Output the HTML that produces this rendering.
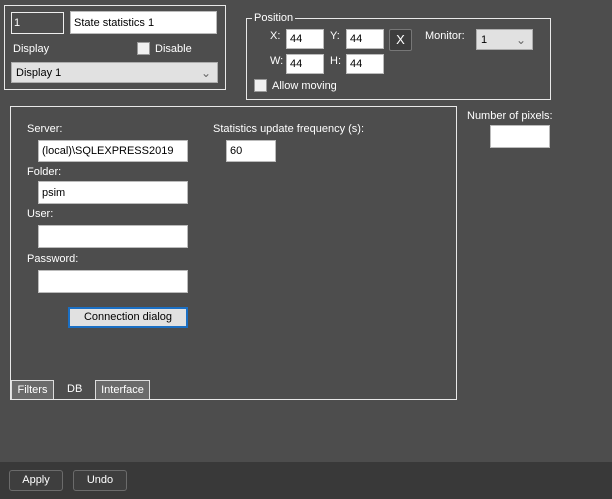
<!DOCTYPE html>
<html><head><style>
*{margin:0;padding:0;box-sizing:border-box}
body{width:612px;height:499px;background:#4d4d4d;position:relative;overflow:hidden;font-family:"Liberation Sans",Arial,sans-serif;font-size:11px;color:#fff}
div,span{position:absolute}
.b{border:1px solid #e8e8e8}
.in{background:#fff;color:#000;border:1px solid #bbb;padding:0 0 0 3px;display:flex;align-items:center}
.l{white-space:nowrap;line-height:13px}
.cb{width:13px;height:13px;background:#f0f0f0;border:1px solid #999}
.dd{background:#e1e1e1;color:#000;border:1px solid #adadad;padding:0 0 0 4px;display:flex;align-items:center}
.btn{background:#3e3e3e;border:1px solid #6b6b6b;border-radius:3px;text-align:center;line-height:19px}
.tab{background:#6a6a6a;border:1px solid #ddd;border-bottom:none;text-align:center;line-height:18px}
.ar{right:6px;top:3px;color:#666;font-size:12px}
</style></head><body>
<div class="b" style="left:4px;top:5px;width:222px;height:85px"></div>
<div style="left:11px;top:12px;width:53px;height:22px;border:1px solid #eee;padding:0 0 0 2px;display:flex;align-items:center">1</div>
<div class="in" style="left:70px;top:11px;width:147px;height:23px">State statistics 1</div>
<div class="l" style="left:13px;top:43px">Display</div>
<div class="cb" style="left:137px;top:42px"></div>
<div class="l" style="left:155px;top:43px">Disable</div>
<div class="dd" style="left:11px;top:62px;width:207px;height:21px">Display 1<span class="ar">&#8964;</span></div>

<div class="b" style="left:246px;top:18px;width:305px;height:82px"></div>
<div class="l" style="left:252px;top:12px;background:#4d4d4d;padding:0 2px">Position</div>
<div class="l" style="left:270px;top:30px">X:</div>
<div class="in" style="left:286px;top:29px;width:38px;height:20px">44</div>
<div class="l" style="left:330px;top:30px">Y:</div>
<div class="in" style="left:346px;top:29px;width:38px;height:20px">44</div>
<div style="left:389px;top:29px;width:23px;height:22px;background:#3d3d3d;border:1px solid #777;border-radius:2px;text-align:center;line-height:20px;font-size:13px">X</div>
<div class="l" style="left:425px;top:30px">Monitor:</div>
<div class="dd" style="left:476px;top:29px;width:57px;height:21px">1<span class="ar">&#8964;</span></div>
<div class="l" style="left:270px;top:55px">W:</div>
<div class="in" style="left:286px;top:54px;width:38px;height:20px">44</div>
<div class="l" style="left:330px;top:55px">H:</div>
<div class="in" style="left:346px;top:54px;width:38px;height:20px">44</div>
<div class="cb" style="left:254px;top:79px"></div>
<div class="l" style="left:272px;top:80px">Allow moving</div>

<div class="b" style="left:10px;top:106px;width:447px;height:294px"></div>
<div class="l" style="left:467px;top:110px">Number of pixels:</div>
<div class="in" style="left:490px;top:125px;width:60px;height:23px"></div>

<div class="l" style="left:27px;top:123px">Server:</div>
<div class="in" style="left:38px;top:140px;width:150px;height:22px">(local)\SQLEXPRESS2019</div>
<div class="l" style="left:213px;top:123px">Statistics update frequency (s):</div>
<div class="in" style="left:226px;top:140px;width:50px;height:22px">60</div>
<div class="l" style="left:27px;top:166px">Folder:</div>
<div class="in" style="left:38px;top:181px;width:150px;height:23px">psim</div>
<div class="l" style="left:27px;top:208px">User:</div>
<div class="in" style="left:38px;top:225px;width:150px;height:23px"></div>
<div class="l" style="left:27px;top:253px">Password:</div>
<div class="in" style="left:38px;top:270px;width:150px;height:23px"></div>
<div style="left:68px;top:307px;width:120px;height:21px;background:#e1e1e1;border:2px solid #1a6fc4;color:#000;text-align:center;line-height:17px">Connection dialog</div>

<div class="tab" style="left:11px;top:380px;width:43px;height:19px">Filters</div>
<div class="l" style="left:67px;top:383px">DB</div>
<div class="tab" style="left:95px;top:380px;width:55px;height:19px">Interface</div>

<div style="left:0;top:462px;width:612px;height:37px;background:#393939"></div>
<div class="btn" style="left:9px;top:470px;width:54px;height:21px">Apply</div>
<div class="btn" style="left:73px;top:470px;width:54px;height:21px">Undo</div>
</body></html>
